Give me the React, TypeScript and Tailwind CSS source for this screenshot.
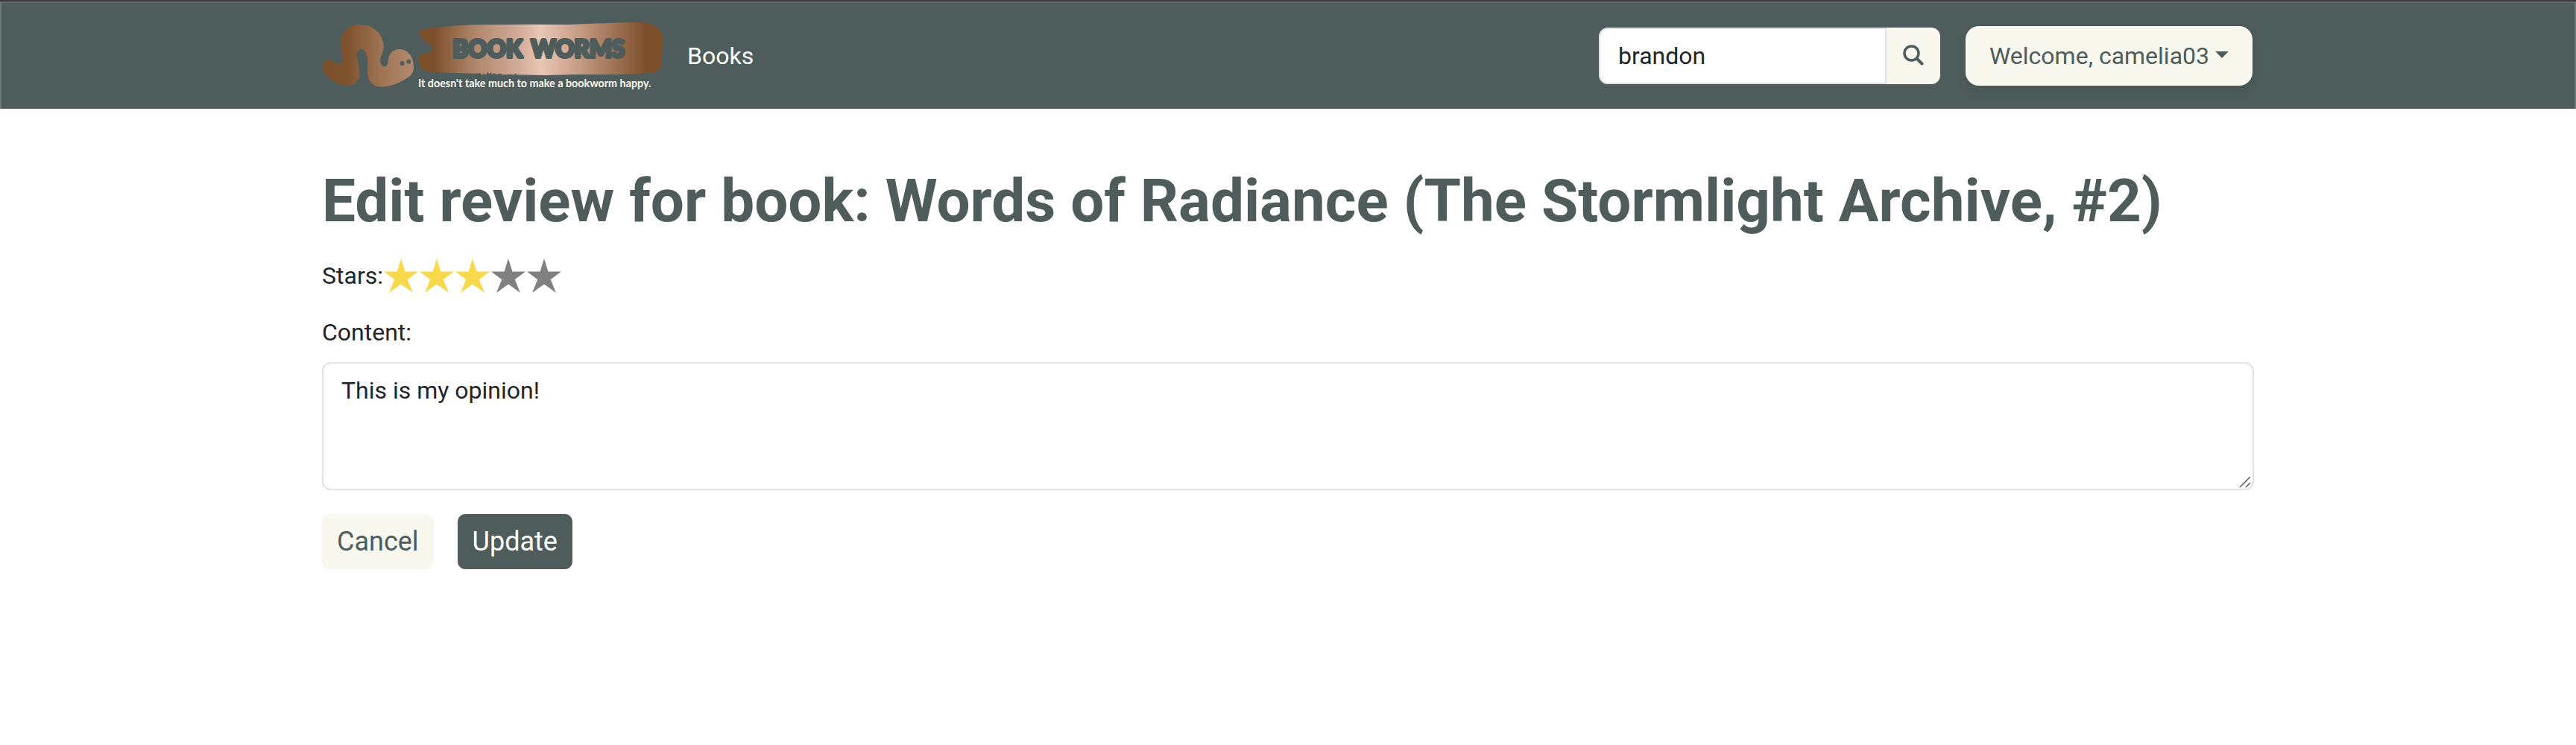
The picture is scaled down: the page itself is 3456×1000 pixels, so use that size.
import React, { useState } from "react";

function Logo() {
  return (
    <svg
      viewBox="36 0 1380 330"
      className="h-[110px] w-[460px] shrink-0"
      role="img"
      aria-label="Book Worms"
    >
      <defs>
        <linearGradient id="worm" gradientUnits="userSpaceOnUse" x1="36" y1="0" x2="406" y2="0">
          <stop offset="0" stopColor="#7c4f2b" />
          <stop offset="0.27" stopColor="#7f522e" />
          <stop offset="0.65" stopColor="#9f7454" />
          <stop offset="1" stopColor="#b38a70" />
        </linearGradient>
        <linearGradient id="banner" gradientUnits="userSpaceOnUse" x1="426" y1="0" x2="1408" y2="0">
          <stop offset="0" stopColor="#7c4f2b" />
          <stop offset="0.06" stopColor="#7c4f2b" />
          <stop offset="0.22" stopColor="#ae8468" />
          <stop offset="0.42" stopColor="#d5ae9b" />
          <stop offset="0.5" stopColor="#e9c6b6" />
          <stop offset="0.6" stopColor="#d3ab97" />
          <stop offset="0.75" stopColor="#ac8165" />
          <stop offset="0.93" stopColor="#7c4f2b" />
          <stop offset="1" stopColor="#7c4f2b" />
        </linearGradient>
      </defs>
      <path
        fill="url(#worm)"
        d="M64 180C78 179 84 194 99 196C111 197 119 193 119 181C119 160 112 139 112 112C112 69 143 39 188 39C243 39 284 76 284 132C284 154 270 164 270 184C270 198 277 208 288 208C306 208 299 180 307 163C315 146 328 138 346 138C382 138 405 170 405 210C405 235 391 250 366 262C340 276 309 290 276 290C239 290 219 266 219 228C219 204 223 183 215 160C211 146 205 138 195 138C181 138 174 153 177 171C181 193 188 213 187 240C186 268 166 284 140 284C108 284 77 267 56 245C42 230 35 211 40 200C44 190 51 181 64 180Z"
      />
      <circle cx="359" cy="195" r="9" fill="#4e5c5c" />
      <circle cx="385" cy="188" r="9" fill="#4e5c5c" />
      <path
        fill="url(#banner)"
        d="M426 66C431 60 444 60 455 57C505 48 570 44 640 40L880 38L1030 39C1130 36 1220 30 1318 30C1365 31 1405 50 1408 95L1406 145L1402 195C1400 220 1393 227 1375 231C1330 237 1280 240 1230 240L1050 240L930 243L820 241L815 236L808 241L790 239L765 241L752 236L738 240L728 235L720 240L716 231L710 238L702 230L697 241L690 237L680 241L672 234L660 236L540 233C500 232 465 230 440 223C439 208 432 209 429 198C424 184 424 168 432 160C443 154 462 154 472 149C478 144 478 138 476 133C477 125 478 120 468 116C454 113 448 103 442 95C435 85 426 78 426 66Z"
      />
      <g
        fill="#4e5c5c"
        stroke="#4e5c5c"
        strokeWidth="12"
        strokeLinejoin="round"
        textAnchor="middle"
        fontFamily="Lato, sans-serif"
        fontWeight="900"
        fontSize="94"
      >
        <text x="702" y="170">
          BOOK
        </text>
        <text x="1066" y="170">
          WORMS
        </text>
      </g>
      <text
        x="423"
        y="292"
        fill="#f8f8ef"
        fontFamily="Lato, sans-serif"
        fontWeight="700"
        fontSize="43"
      >
        It doesn't take much to make a bookworm happy.
      </text>
    </svg>
  );
}

function Header() {
  return (
    <header className="border-t-2 border-[#39383d] bg-[#4e5c5c]">
      <div className="border-x-2 border-t-2 border-x-[#687777] border-t-[#5e6a6b]">
        <nav className="mx-auto flex h-[142px] max-w-[2640px] items-center justify-between pr-[26px] pl-6">
          <div className="flex items-center gap-[30px]">
            <a href="#home">
              <Logo />
            </a>
            <a href="#books" className="text-[#fffffa]">
              Books
            </a>
          </div>
          <div className="flex items-center gap-[34px]">
            <form className="flex h-[76px]" onSubmit={(e) => e.preventDefault()}>
              <input
                type="text"
                aria-label="Search books"
                defaultValue="brandon"
                className="w-[386px] rounded-l-xl border-2 border-[#dee2e6] bg-white px-6 outline-none"
              />
              <button
                type="submit"
                aria-label="Search"
                className="flex w-[72px] items-center justify-center rounded-r-xl bg-[#f8f8ef] pb-0.5 text-[#4e5c5c]"
              >
                <svg viewBox="0 0 28 28" className="size-7" fill="none" stroke="currentColor" aria-hidden="true">
                  <circle cx="11.500" cy="11.500" r="9.500" strokeWidth="3.500" />
                  <path d="M18.500 18.500L25.500 25.500" strokeWidth="4" strokeLinecap="round" />
                </svg>
              </button>
            </form>
            <button
              type="button"
              aria-haspopup="menu"
              className="flex h-20 items-center gap-2 rounded-[18px] bg-[#f8f8ef] px-8 text-[#4e5c5c] shadow-[0_8px_16px_rgba(0,0,0,0.08)]"
            >
              Welcome, camelia03
              <svg viewBox="0 0 18 14" className="h-[14px] w-[18px]" fill="currentColor" aria-hidden="true">
                <path d="M0 1h18L9 10z" />
              </svg>
            </button>
          </div>
        </nav>
      </div>
    </header>
  );
}

function StarRating() {
  const [rating, setRating] = useState(3);
  return (
    <fieldset className="flex h-12 items-center">
      <legend className="float-left">Stars:</legend>
      {[1, 2, 3, 4, 5].map((value) => (
        <label key={value} className="relative flex w-12 cursor-pointer justify-center">
          <input
            type="radio"
            name="stars"
            value={value}
            aria-label={`${value} stars`}
            checked={rating === value}
            onChange={() => setRating(value)}
            className="sr-only"
          />
          <svg
            viewBox="0 0 46 46"
            aria-hidden="true"
            className={value <= rating ? "size-[46px] fill-[#f8d949]" : "size-[46px] fill-[#808080]"}
          >
            <path d="M23 0L28.400 17.500H46L31.800 28.200L39 46L23 34.500L7 46L14.200 28.200L0 17.500H17.600Z" />
          </svg>
        </label>
      ))}
    </fieldset>
  );
}

export default function App() {
  return (
    <div className="min-h-screen bg-white font-[Roboto,sans-serif] text-[32px] leading-[48px] text-[#212529]">
      <Header />
      <main className="mx-auto max-w-[2640px] px-6 pt-[76px]">
        <h1 className="mb-7 text-[80px] leading-[96px] font-bold text-[#4e5c5c]">
          Edit review for book: Words of Radiance (The Stormlight Archive, #2)
        </h1>
        <form onSubmit={(e) => e.preventDefault()}>
          <StarRating />
          <label htmlFor="content" className="mt-7 mb-4 block">
            Content:
          </label>
          <div className="relative">
            <textarea
              id="content"
              rows={3}
              defaultValue="This is my opinion!"
              className="block w-full resize-y rounded-xl border-2 border-[#dee2e6] bg-white px-6 py-3 outline-none [&::-webkit-resizer]:hidden"
            />
            <svg
              viewBox="0 0 16 16"
              className="pointer-events-none absolute right-1 bottom-[3px] size-4"
              stroke="#5c5c5c"
              strokeWidth="1.500"
              aria-hidden="true"
            >
              <path d="M1 15L15 1M9 15L15 9" />
            </svg>
          </div>
          <div className="mt-8 flex gap-8 text-[36px] leading-[54px]">
            <button type="button" className="rounded-[10px] bg-[#f8f8ef] px-5 py-[10px] text-[#4e5c5c]">
              Cancel
            </button>
            <button type="submit" className="rounded-[10px] bg-[#4e5c5c] px-5 py-[10px] text-white">
              Update
            </button>
          </div>
        </form>
      </main>
    </div>
  );
}
